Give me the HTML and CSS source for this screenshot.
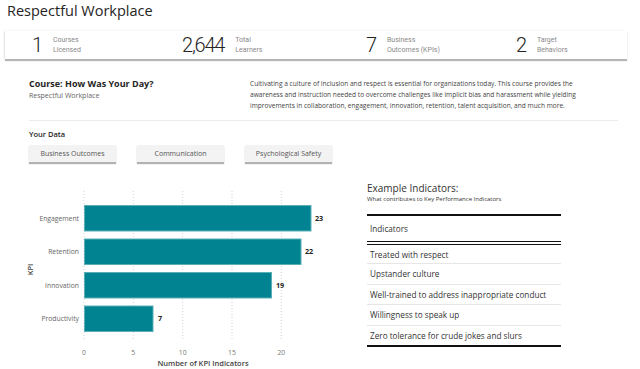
FILE: index.html
```html
<!DOCTYPE html>
<html>
    <head>
        <meta content="text/html;charset=utf-8" http-equiv="Content-Type" />
        <title>Respectful Workplace</title>
        <link rel="stylesheet" href="styles.css">
    </head>
    <body>
        <h1 class="page-title">Respectful Workplace</h1>

        <div class="kpi-card">
            <div class="kpi"><span class="kpi-value">1</span><span class="kpi-label">Courses<br>Licensed</span></div>
            <div class="kpi"><span class="kpi-value">2,644</span><span class="kpi-label">Total<br>Learners</span></div>
            <div class="kpi"><span class="kpi-value">7</span><span class="kpi-label">Business<br>Outcomes (KPIs)</span></div>
            <div class="kpi"><span class="kpi-value">2</span><span class="kpi-label">Target<br>Behaviors</span></div>
        </div>

        <section class="course">
            <div class="course-head">
                <h2 class="course-title">Course: How Was Your Day?</h2>
                <p class="course-sub">Respectful Workplace</p>
            </div>
            <p class="course-desc">Cultivating a culture of inclusion and respect is essential for organizations today. This course provides the awareness and instruction needed to overcome challenges like implicit bias and harassment while yielding improvements in collaboration, engagement, innovation, retention, talent acquisition, and much more.</p>
        </section>

        <hr class="divider">

        <h3 class="data-title">Your Data</h3>
        <div class="tabs">
            <button class="tab">Business Outcomes</button>
            <button class="tab">Communication</button>
            <button class="tab">Psychological Safety</button>
        </div>

        <div class="bottom">
            <div class="chart">
                <svg width="340" height="199" viewBox="0 0 340 199">
                    <g class="grid-lines">
                        <line x1="84" y1="22" x2="84" y2="170" />
                        <line x1="133.3" y1="22" x2="133.3" y2="170" />
                        <line x1="182.7" y1="22" x2="182.7" y2="170" />
                        <line x1="232" y1="22" x2="232" y2="170" />
                        <line x1="281.3" y1="22" x2="281.3" y2="170" />
                    </g>
                    <g class="bars">
                        <rect x="84.5" y="36.5" width="226.5" height="25.5" />
                        <rect x="84.5" y="70" width="216.5" height="25.5" />
                        <rect x="84.5" y="103.5" width="187" height="25.5" />
                        <rect x="84.5" y="137" width="68.5" height="25.5" />
                    </g>
                    <g class="cat-labels">
                        <text x="79" y="51.5">Engagement</text>
                        <text x="79" y="85">Retention</text>
                        <text x="79" y="118.5">Innovation</text>
                        <text x="79" y="152">Productivity</text>
                    </g>
                    <g class="val-labels">
                        <text x="315" y="51.5">23</text>
                        <text x="305" y="85">22</text>
                        <text x="276" y="118.5">19</text>
                        <text x="158" y="152">7</text>
                    </g>
                    <g class="ticks">
                        <text x="84" y="186">0</text>
                        <text x="133.3" y="186">5</text>
                        <text x="182.7" y="186">10</text>
                        <text x="232" y="186">15</text>
                        <text x="281.3" y="186">20</text>
                    </g>
                    <text class="axis-title" x="203" y="197">Number of KPI Indicators</text>
                    <text class="axis-title" transform="translate(32.5 100.5) rotate(-90)">KPI</text>
                </svg>
            </div>

            <div class="indicators">
                <h4 class="ind-title">Example Indicators:</h4>
                <p class="ind-sub">What contributes to Key Performance Indicators</p>
                <table class="ind-table">
                    <thead>
                        <tr><th>Indicators</th></tr>
                    </thead>
                    <tbody>
                        <tr><td>Treated with respect</td></tr>
                        <tr><td>Upstander culture</td></tr>
                        <tr><td>Well-trained to address inappropriate conduct</td></tr>
                        <tr><td>Willingness to speak up</td></tr>
                        <tr><td>Zero tolerance for crude jokes and slurs</td></tr>
                    </tbody>
                </table>
            </div>
        </div>
    </body>
</html>
```

FILE: styles.css
```css
* {
    box-sizing: border-box;
}

body {
    margin: 0;
    width: 640px;
    height: 369px;
    overflow: hidden;
    font-family: "Open Sans", sans-serif;
    color: #252423;
    background-color: #fff;
}

.page-title {
    margin: 0;
    height: 31px;
    padding: 1px 0 0 7px;
    font-size: 14.5px;
    font-weight: 400;
    line-height: 20px;
}

/* top card with the four numbers */
.kpi-card {
    display: grid;
    grid-template-columns: 150px 184px 150px 1fr;
    align-items: center;
    margin-left: 5px;
    width: 622px;
    height: 28px;
    padding-left: 27px;
    background-color: #fff;
    box-shadow: 0 2px 1px rgba(0, 0, 0, 0.28), -1px 0 2px rgba(0, 0, 0, 0.08);
}

.kpi {
    display: flex;
    align-items: center;
    gap: 11px;
}

.kpi-value {
    font-family: Roboto, sans-serif;
    font-weight: 300;
    font-size: 20px;
    letter-spacing: -1.2px;
    line-height: 20px;
    color: #252423;
}

.kpi-label {
    font-family: Roboto, sans-serif;
    font-size: 7px;
    line-height: 10px;
    color: #8a8a8a;
}

/* course description */
.course {
    display: flex;
    margin-top: 19px;
    padding-left: 29px;
}

.course-head {
    width: 221px;
}

.course-title {
    margin: 0;
    font-size: 9px;
    font-weight: 700;
    line-height: 12px;
}

.course-sub {
    margin: 1px 0 0 0;
    font-size: 7px;
    line-height: 10px;
    color: #666;
}

.course-desc {
    margin: 0;
    width: 345px;
    font-size: 6.6px;
    line-height: 11px;
    color: #444;
}

.divider {
    margin: 9px 0 0 29px;
    width: 589px;
    border: none;
    border-top: 1px solid #ececec;
}

.data-title {
    margin: 8px 0 0 29px;
    font-size: 7.5px;
    font-weight: 600;
    line-height: 10px;
}

.tabs {
    display: flex;
    gap: 21px;
    margin: 6px 0 0 29px;
}

.tab {
    width: 87px;
    height: 17px;
    padding: 0;
    border: none;
    background-color: #f3f3f3;
    box-shadow: 0 2px 1px rgba(0, 0, 0, 0.3);
    font-family: "Open Sans", sans-serif;
    font-size: 7px;
    color: #555;
}

/* chart + indicator table */
.bottom {
    display: flex;
    margin-top: 7px;
}

.chart svg {
    display: block;
    font-family: "Open Sans", sans-serif;
}

.grid-lines line {
    stroke: #c8c8c8;
    stroke-width: 0.8;
    stroke-dasharray: 1 2;
}

.bars rect {
    fill: #028391;
    stroke: #5aafb7;
    stroke-width: 1;
}

.cat-labels text {
    font-size: 6.8px;
    fill: #666;
    text-anchor: end;
}

.val-labels text {
    font-size: 7.2px;
    font-weight: 700;
    fill: #252423;
}

.ticks text {
    font-size: 6.8px;
    fill: #777;
    text-anchor: middle;
}

.axis-title {
    font-size: 7.5px;
    font-weight: 600;
    fill: #444;
    text-anchor: middle;
}

.indicators {
    margin-left: 27px;
    width: 194px;
    padding-top: 13px;
}

.ind-title {
    margin: 0;
    font-size: 10px;
    font-weight: 400;
    line-height: 13px;
    color: #333;
}

.ind-sub {
    margin: 0;
    font-size: 6px;
    line-height: 9px;
    color: #333;
}

.ind-table {
    margin-top: 10px;
    width: 194px;
    border-collapse: collapse;
    border-top: 2px solid #111;
    border-bottom: 2px solid #111;
    font-size: 8.2px;
    color: #333;
    text-align: left;
}

.ind-table th {
    height: 28px;
    padding: 0 3px;
    font-weight: 400;
    border-bottom: 4px double #111;
}

.ind-table td {
    height: 20.5px;
    padding: 0 3px;
    border-bottom: 1px solid #e6e6e6;
}

.ind-table tr:last-child td {
    border-bottom: none;
}
```
